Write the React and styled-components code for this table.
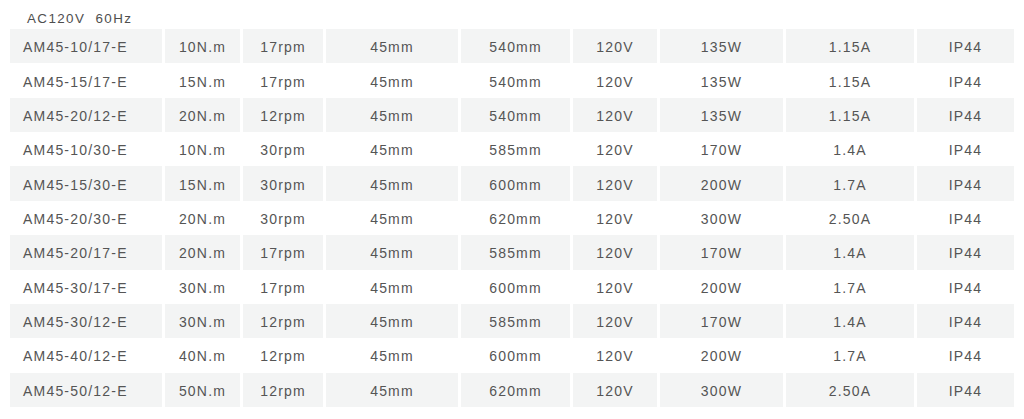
import React from "react";
import styled, { createGlobalStyle } from "styled-components";

const Global = createGlobalStyle`
  html, body { margin: 0; padding: 0; background: #ffffff; }
  body { font-family: "Liberation Sans", Arial, sans-serif; }
`;

const Page = styled.div`
  width: 1024px;
  height: 419px;
  box-sizing: border-box;
  padding-left: 10px;
  background: #ffffff;
  color: #555555;
  font-family: "Liberation Sans", Arial, sans-serif;
  font-size: 14px;
  letter-spacing: 1.2px;
`;

const Title = styled.div`
  height: 29px;
  box-sizing: border-box;
  padding: 8px 0 0 17px;
  font-size: 13.4px;
  letter-spacing: 1.4px;
  line-height: 21px;
  white-space: pre;
  color: #4e4e4e;
`;

const Table = styled.div`
  display: flex;
  flex-direction: column;
  width: 1004px;
`;

const Row = styled.div`
  display: grid;
  grid-template-columns: 152px 75px 80px 132px 109px 84px 123px 128px 97px;
  column-gap: 3px;
  height: 34.36px;
`;

const Cell = styled.div`
  display: flex;
  align-items: center;
  justify-content: ${(p) => (p.$left ? "flex-start" : "center")};
  padding: ${(p) => (p.$left ? "2px 0 0 13px" : "2px 0 0 0")};
  box-sizing: border-box;
  background: ${(p) => (p.$shade ? "#f3f4f4" : "#ffffff")};
  white-space: nowrap;
`;

const rows = [
  ["AM45-10/17-E", "10N.m", "17rpm", "45mm", "540mm", "120V", "135W", "1.15A", "IP44"],
  ["AM45-15/17-E", "15N.m", "17rpm", "45mm", "540mm", "120V", "135W", "1.15A", "IP44"],
  ["AM45-20/12-E", "20N.m", "12rpm", "45mm", "540mm", "120V", "135W", "1.15A", "IP44"],
  ["AM45-10/30-E", "10N.m", "30rpm", "45mm", "585mm", "120V", "170W", "1.4A", "IP44"],
  ["AM45-15/30-E", "15N.m", "30rpm", "45mm", "600mm", "120V", "200W", "1.7A", "IP44"],
  ["AM45-20/30-E", "20N.m", "30rpm", "45mm", "620mm", "120V", "300W", "2.50A", "IP44"],
  ["AM45-20/17-E", "20N.m", "17rpm", "45mm", "585mm", "120V", "170W", "1.4A", "IP44"],
  ["AM45-30/17-E", "30N.m", "17rpm", "45mm", "600mm", "120V", "200W", "1.7A", "IP44"],
  ["AM45-30/12-E", "30N.m", "12rpm", "45mm", "585mm", "120V", "170W", "1.4A", "IP44"],
  ["AM45-40/12-E", "40N.m", "12rpm", "45mm", "600mm", "120V", "200W", "1.7A", "IP44"],
  ["AM45-50/12-E", "50N.m", "12rpm", "45mm", "620mm", "120V", "300W", "2.50A", "IP44"],
];

export default function App() {
  return (
    <>
      <Global />
      <Page>
        <Title>{"AC120V  60Hz"}</Title>
        <Table>
          {rows.map((r, i) => (
            <Row key={i}>
              {r.map((c, j) => (
                <Cell key={j} $left={j === 0} $shade={i % 2 === 0}>
                  {c}
                </Cell>
              ))}
            </Row>
          ))}
        </Table>
      </Page>
    </>
  );
}
